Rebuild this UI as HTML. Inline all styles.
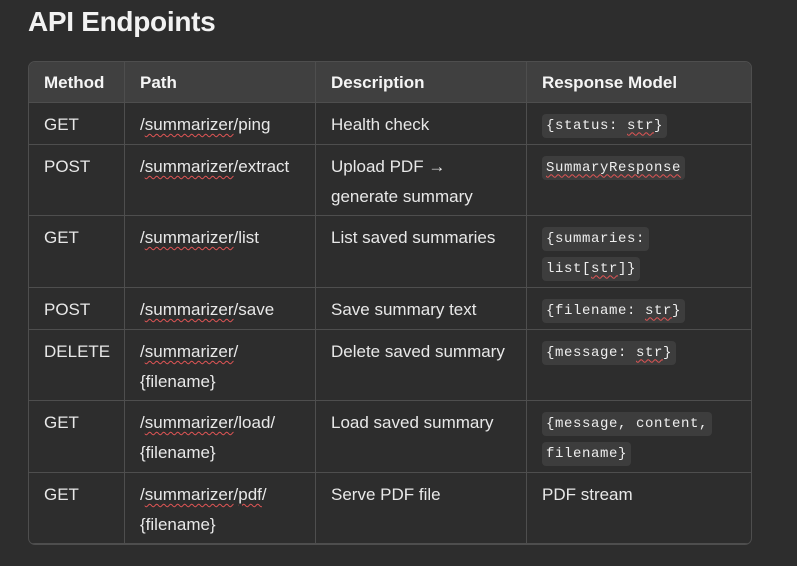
<!DOCTYPE html>
<html><head><meta charset="utf-8"><style>
html,body{margin:0;padding:0;background:#2d2d2d;width:797px;height:566px;overflow:hidden;font-family:"Liberation Sans",sans-serif;color:#e8e8e8}
h1{position:absolute;left:28px;top:6px;margin:0;font-size:28px;font-weight:bold;color:#f2f2f2;letter-spacing:-0.3px}
.wrap{position:absolute;left:28px;top:61px;width:722px;height:482px;border:1px solid #4e4e4e;border-radius:7px;overflow:hidden}
table{border-collapse:collapse;table-layout:fixed;width:724px;margin:-1px;font-size:17px}
td,th{border:1px solid #4e4e4e;vertical-align:top;text-align:left;padding:7px 0 0 15px;line-height:30px}
th{background:#404040;font-weight:bold;padding-top:6px;color:#f5f5f5}
.sp{text-decoration:underline wavy #e05555;text-decoration-thickness:1px;text-underline-offset:3px}
.l{height:30px;line-height:30px;overflow:visible;white-space:nowrap}
code{font-family:"Liberation Mono",monospace;font-size:14px;line-height:16px;display:inline-block;background:#3d3d3d;padding:4px 4px;border-radius:4px;letter-spacing:0.6px;color:#eee;vertical-align:middle}
</style></head><body>
<h1>API Endpoints</h1>
<div class="wrap"><table>
<colgroup><col style="width:96px"><col style="width:191px"><col style="width:211px"><col style="width:226px"></colgroup>
<tr style="height:41px"><th>Method</th><th>Path</th><th>Description</th><th>Response Model</th></tr>
<tr style="height:42px"><td>GET</td><td>/<span class="sp">summarizer</span>/ping</td><td>Health check</td><td><div class="l"><code>{status: <span class="sp">str</span>}</code></div></td></tr>
<tr style="height:71px"><td>POST</td><td>/<span class="sp">summarizer</span>/extract</td><td>Upload PDF →<br>generate summary</td><td><div class="l"><code><span class="sp">SummaryResponse</span></code></div></td></tr>
<tr style="height:72px"><td>GET</td><td>/<span class="sp">summarizer</span>/list</td><td>List saved summaries</td><td><div class="l"><code>{summaries:</code></div><div class="l"><code>list[<span class="sp">str</span>]}</code></div></td></tr>
<tr style="height:42px"><td>POST</td><td>/<span class="sp">summarizer</span>/save</td><td>Save summary text</td><td><div class="l"><code>{filename: <span class="sp">str</span>}</code></div></td></tr>
<tr style="height:71px"><td>DELETE</td><td>/<span class="sp">summarizer</span>/<br>{filename}</td><td>Delete saved summary</td><td><div class="l"><code>{message: <span class="sp">str</span>}</code></div></td></tr>
<tr style="height:72px"><td>GET</td><td>/<span class="sp">summarizer</span>/load/<br>{filename}</td><td>Load saved summary</td><td><div class="l"><code>{message, content,</code></div><div class="l"><code>filename}</code></div></td></tr>
<tr style="height:71px"><td>GET</td><td>/<span class="sp">summarizer</span>/<span class="sp">pdf</span>/<br>{filename}</td><td>Serve PDF file</td><td>PDF stream</td></tr>
</table></div>
</body></html>
